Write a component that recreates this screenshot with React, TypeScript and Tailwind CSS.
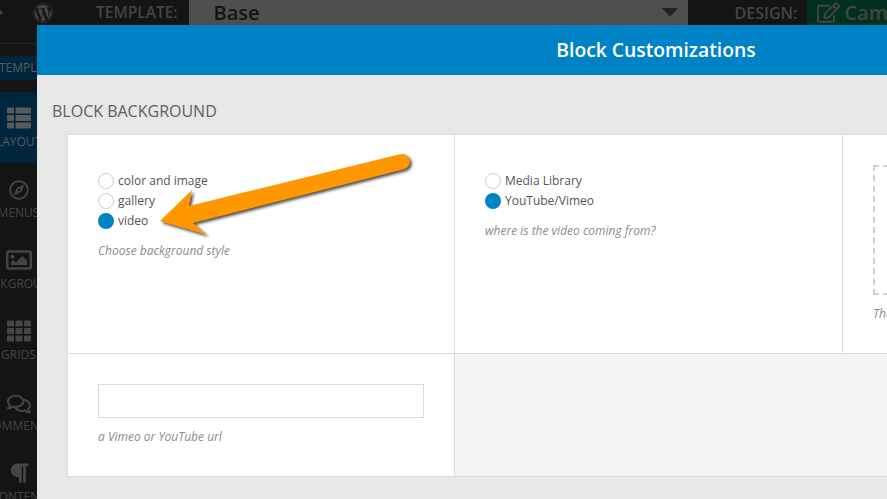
import type { ReactNode } from "react";
import { FaArrowUp, FaParagraph, FaRegComments, FaRegCompass, FaRegEdit, FaRegImage, FaTh, FaThList, FaWordpress } from "react-icons/fa";

function SideItem({ label, active, children }: { label: string; active?: boolean; children: ReactNode }) {
  return (
    <div className={`flex h-[71px] shrink-0 flex-col items-center pt-4 ${active ? "bg-[#00263d]" : ""}`}>
      <div className="flex h-5 items-center justify-center">{children}</div>
      <span className={`mt-[6px] whitespace-nowrap text-[12px] leading-4 ${active ? "text-[#5a5a5a]" : "text-[#444444]"}`}>{label}</span>
    </div>
  );
}

function Radio({ label, checked }: { label: string; checked?: boolean }) {
  return (
    <div className="flex h-5 items-center gap-1">
      <span className={`h-4 w-4 rounded-full ${checked ? "bg-[#0083c6]" : "border border-[#cccccc] bg-white"}`} />
      <span className="text-[12px] text-[#555555]">{label}</span>
    </div>
  );
}

function Hint({ children }: { children: ReactNode }) {
  return <p className="text-[12px] italic text-[#8c8c8c]">{children}</p>;
}

export default function App() {
  return (
    <div className="relative h-[499px] w-[887px] overflow-hidden bg-[#141414] font-['Open_Sans',sans-serif]">
      {/* Top bar, dimmed behind the modal */}
      <div className="flex h-[25px] items-center">
        <FaArrowUp size={18} className="-ml-[14px] shrink-0 text-[#444444]" />
        <FaWordpress size={20} className="ml-[29px] shrink-0 text-[#444444]" />
        <span className="ml-[43px] text-[15.5px] font-semibold text-[#444444]">TEMPLATE:</span>
        <div className="ml-[11px] flex h-[25px] w-[499px] shrink-0 items-center justify-between bg-[#4f4f4f] pl-[25px] pr-[10px]">
          <span className="text-[20px] font-semibold text-[#141414]">Base</span>
          <span className="h-0 w-0 border-x-[8px] border-t-[9px] border-x-transparent border-t-[#222222]" />
        </div>
        <span className="ml-[47px] text-[16px] font-semibold text-[#444444]">DESIGN:</span>
        <div className="ml-[10px] flex h-[25px] flex-1 items-center gap-1 overflow-hidden bg-[#02301f] pl-[10px]">
          <FaRegEdit size={23} className="shrink-0 text-[#444444]" />
          <span className="text-[20px] font-semibold text-[#444444]">Campaign</span>
        </div>
      </div>

      {/* Sidebar */}
      <div className="flex w-[37px] flex-col">
        <div className="mt-[18px] h-px w-full bg-[#222222]" />
        <div className="mt-3 flex h-6 items-center justify-center bg-[#00263d]">
          <span className="whitespace-nowrap pl-[26px] text-[12px] text-[#5a5a5a]">TEMPLATES</span>
        </div>
        <div className="mt-3" />
        <SideItem label="LAYOUT" active>
          <FaThList size={24} className="text-[#5a5a5a]" />
        </SideItem>
        <SideItem label="MENUS">
          <FaRegCompass size={20} className="translate-y-px text-[#444444]" />
        </SideItem>
        <SideItem label="BACKGROUND">
          <FaRegImage size={26} className="text-[#444444]" />
        </SideItem>
        <SideItem label="GRIDS">
          <FaTh size={24} className="text-[#444444]" />
        </SideItem>
        <SideItem label="COMMENTS">
          <FaRegComments size={24} className="translate-y-[2px] text-[#444444]" />
        </SideItem>
        <SideItem label="CONTENT">
          <FaParagraph size={22} className="text-[#444444]" />
        </SideItem>
      </div>

      {/* Modal */}
      <div className="absolute bottom-0 left-[37px] top-[25px] flex w-[1238px] flex-col bg-[#e7e7e7]">
        <div className="flex h-[50px] shrink-0 items-center justify-center bg-[#0083c6]">
          <h1 className="text-[19.3px] font-semibold text-white">Block Customizations</h1>
        </div>
        <h2 className="ml-[15px] mt-[26px] text-[16px] leading-5 text-[#5f5f5f]">BLOCK BACKGROUND</h2>
        <div className="mx-[30px] mt-[13px] border border-[#dcdcdc] bg-white">
          <div className="flex h-[219px] border-b border-[#dcdcdc]">
            <div className="w-[387px] shrink-0 border-r border-[#dcdcdc] pl-[30px] pt-9">
              <Radio label="color and image" />
              <Radio label="gallery" />
              <Radio label="video" checked />
              <div className="mt-[11px]"><Hint>Choose background style</Hint></div>
            </div>
            <div className="w-[388px] shrink-0 border-r border-[#dcdcdc] pl-[30px] pt-9">
              <Radio label="Media Library" />
              <Radio label="YouTube/Vimeo" checked />
              <div className="mt-[11px]"><Hint>where is the video coming from?</Hint></div>
            </div>
            <div className="flex-1 pl-[30px] pt-[30px]">
              <div className="h-[130px] w-[250px] border-2 border-dashed border-[#d0d0d0]" />
              <div className="mt-[10px]"><Hint>The image</Hint></div>
            </div>
          </div>
          <div className="flex h-[122px]">
            <div className="w-[387px] shrink-0 border-r border-[#dcdcdc] pl-[30px] pt-[30px]">
              <div className="h-[34px] w-[326px] border border-[#dcdcdc]" />
              <div className="mt-[10px]"><Hint>a Vimeo or YouTube url</Hint></div>
            </div>
            <div className="flex-1 bg-[#f3f3f3]" />
          </div>
        </div>
      </div>

      {/* Annotation arrow */}
      <svg className="absolute left-0 top-0 drop-shadow-[2px_2px_1.5px_rgba(0,0,0,0.7)]" width="887" height="499" viewBox="0 0 887 499">
        <path d="M160 221 L192 190 L189 206 L399 154.5 A7.5 7.5 0 0 1 405 169 L193 223 L207 235 Z" fill="#ff9800" />
      </svg>
    </div>
  );
}
